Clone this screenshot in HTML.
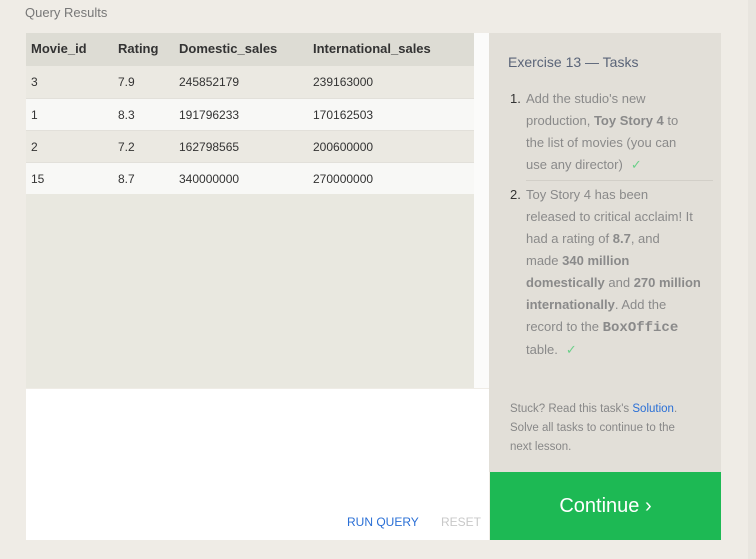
<!DOCTYPE html>
<html><head><style>
*{margin:0;padding:0;box-sizing:border-box}
body{width:756px;height:559px;background:#efece6;font-family:"Liberation Sans",sans-serif;position:relative;overflow:hidden}
.t{position:absolute}
#qr{left:25px;top:5px;font-size:13px;color:#777}
#tbl{left:26px;top:33px;width:448px;height:355px;background:#e9e8e0}
#scr{left:474px;top:33px;width:15px;height:355px;background:#fbfbfa}
.row{position:absolute;left:0;width:448px;height:32px;font-size:12px;color:#333}
.row span{position:absolute;top:9px}
.hd{background:#dddcd4;font-weight:bold;font-size:13px;color:#333;height:33px}
.hd span{top:8px}
.c1{left:5px}.c2{left:92px}.c3{left:153px}.c4{left:287px}
#ed{left:26px;top:389px;width:463px;height:151px;background:#fff}
#run{left:347px;top:515px;font-size:12px;color:#2a6fd6}
#reset{left:441px;top:515px;font-size:12px;color:#c8c8c8}
#rp{left:489px;top:33px;width:232px;height:439px;background:#e2dfd8}
#ex{left:508px;top:54px;font-size:14px;color:#5a6478}
.li{position:absolute;left:526px;width:200px;font-size:13px;line-height:22px;color:#8a8a8a;white-space:nowrap}
.li b{color:#8a8a8a}
.n{position:absolute;left:-16px;color:#333}
.ck{color:#6cd08a;margin-left:8px}
#sep{left:526px;top:180px;width:187px;height:1px;background:#d2cfc8}
#stuck{left:510px;top:400px;width:210px;font-size:11.5px;line-height:19px;color:#888;white-space:nowrap}
#stuck a{color:#2a6fd6;text-decoration:none}
#go{left:490px;top:472px;width:231px;height:68px;background:#1db954;color:#fff;font-size:20px;text-align:center;line-height:68px}
#edge{left:748px;top:0;width:8px;height:559px;background:#e8e5df}
code{font-family:"Liberation Mono",monospace;font-weight:bold;font-size:14px}
</style></head><body>
<div class="t" id="edge"></div>
<div class="t" id="qr">Query Results</div>
<div class="t" id="tbl">
<div class="row hd" style="top:0"><span class="c1">Movie_id</span><span class="c2">Rating</span><span class="c3">Domestic_sales</span><span class="c4">International_sales</span></div>
<div class="row" style="top:33px;background:#ebe9e2"><span class="c1">3</span><span class="c2">7.9</span><span class="c3">245852179</span><span class="c4">239163000</span></div>
<div class="row" style="top:65px;background:#f8f8f6;border-top:1px solid #e2e0da"><span class="c1">1</span><span class="c2">8.3</span><span class="c3">191796233</span><span class="c4">170162503</span></div>
<div class="row" style="top:97px;background:#ebe9e2;border-top:1px solid #e2e0da"><span class="c1">2</span><span class="c2">7.2</span><span class="c3">162798565</span><span class="c4">200600000</span></div>
<div class="row" style="top:129px;background:#f8f8f6;border-top:1px solid #e2e0da"><span class="c1">15</span><span class="c2">8.7</span><span class="c3">340000000</span><span class="c4">270000000</span></div>
</div>
<div class="t" id="scr"></div>
<div class="t" id="ed"></div>
<div class="t" id="run">RUN QUERY</div>
<div class="t" id="reset">RESET</div>
<div class="t" id="rp"></div>
<div class="t" id="ex">Exercise 13 — Tasks</div>
<div class="li" style="top:88px"><span class="n">1.</span>Add the studio's new<br>production, <b>Toy Story 4</b> to<br>the list of movies (you can<br>use any director)<span class="ck">✓</span></div>
<div class="t" id="sep"></div>
<div class="li" style="top:184px"><span class="n">2.</span>Toy Story 4 has been<br>released to critical acclaim! It<br>had a rating of <b>8.7</b>, and<br>made <b>340 million</b><br><b>domestically</b> and <b>270 million</b><br><b>internationally</b>. Add the<br>record to the <code>BoxOffice</code><br>table.<span class="ck">✓</span></div>
<div class="t" id="stuck">Stuck? Read this task's <a>Solution</a>.<br>Solve all tasks to continue to the<br>next lesson.</div>
<div class="t" id="go">Continue ›</div>
</body></html>
